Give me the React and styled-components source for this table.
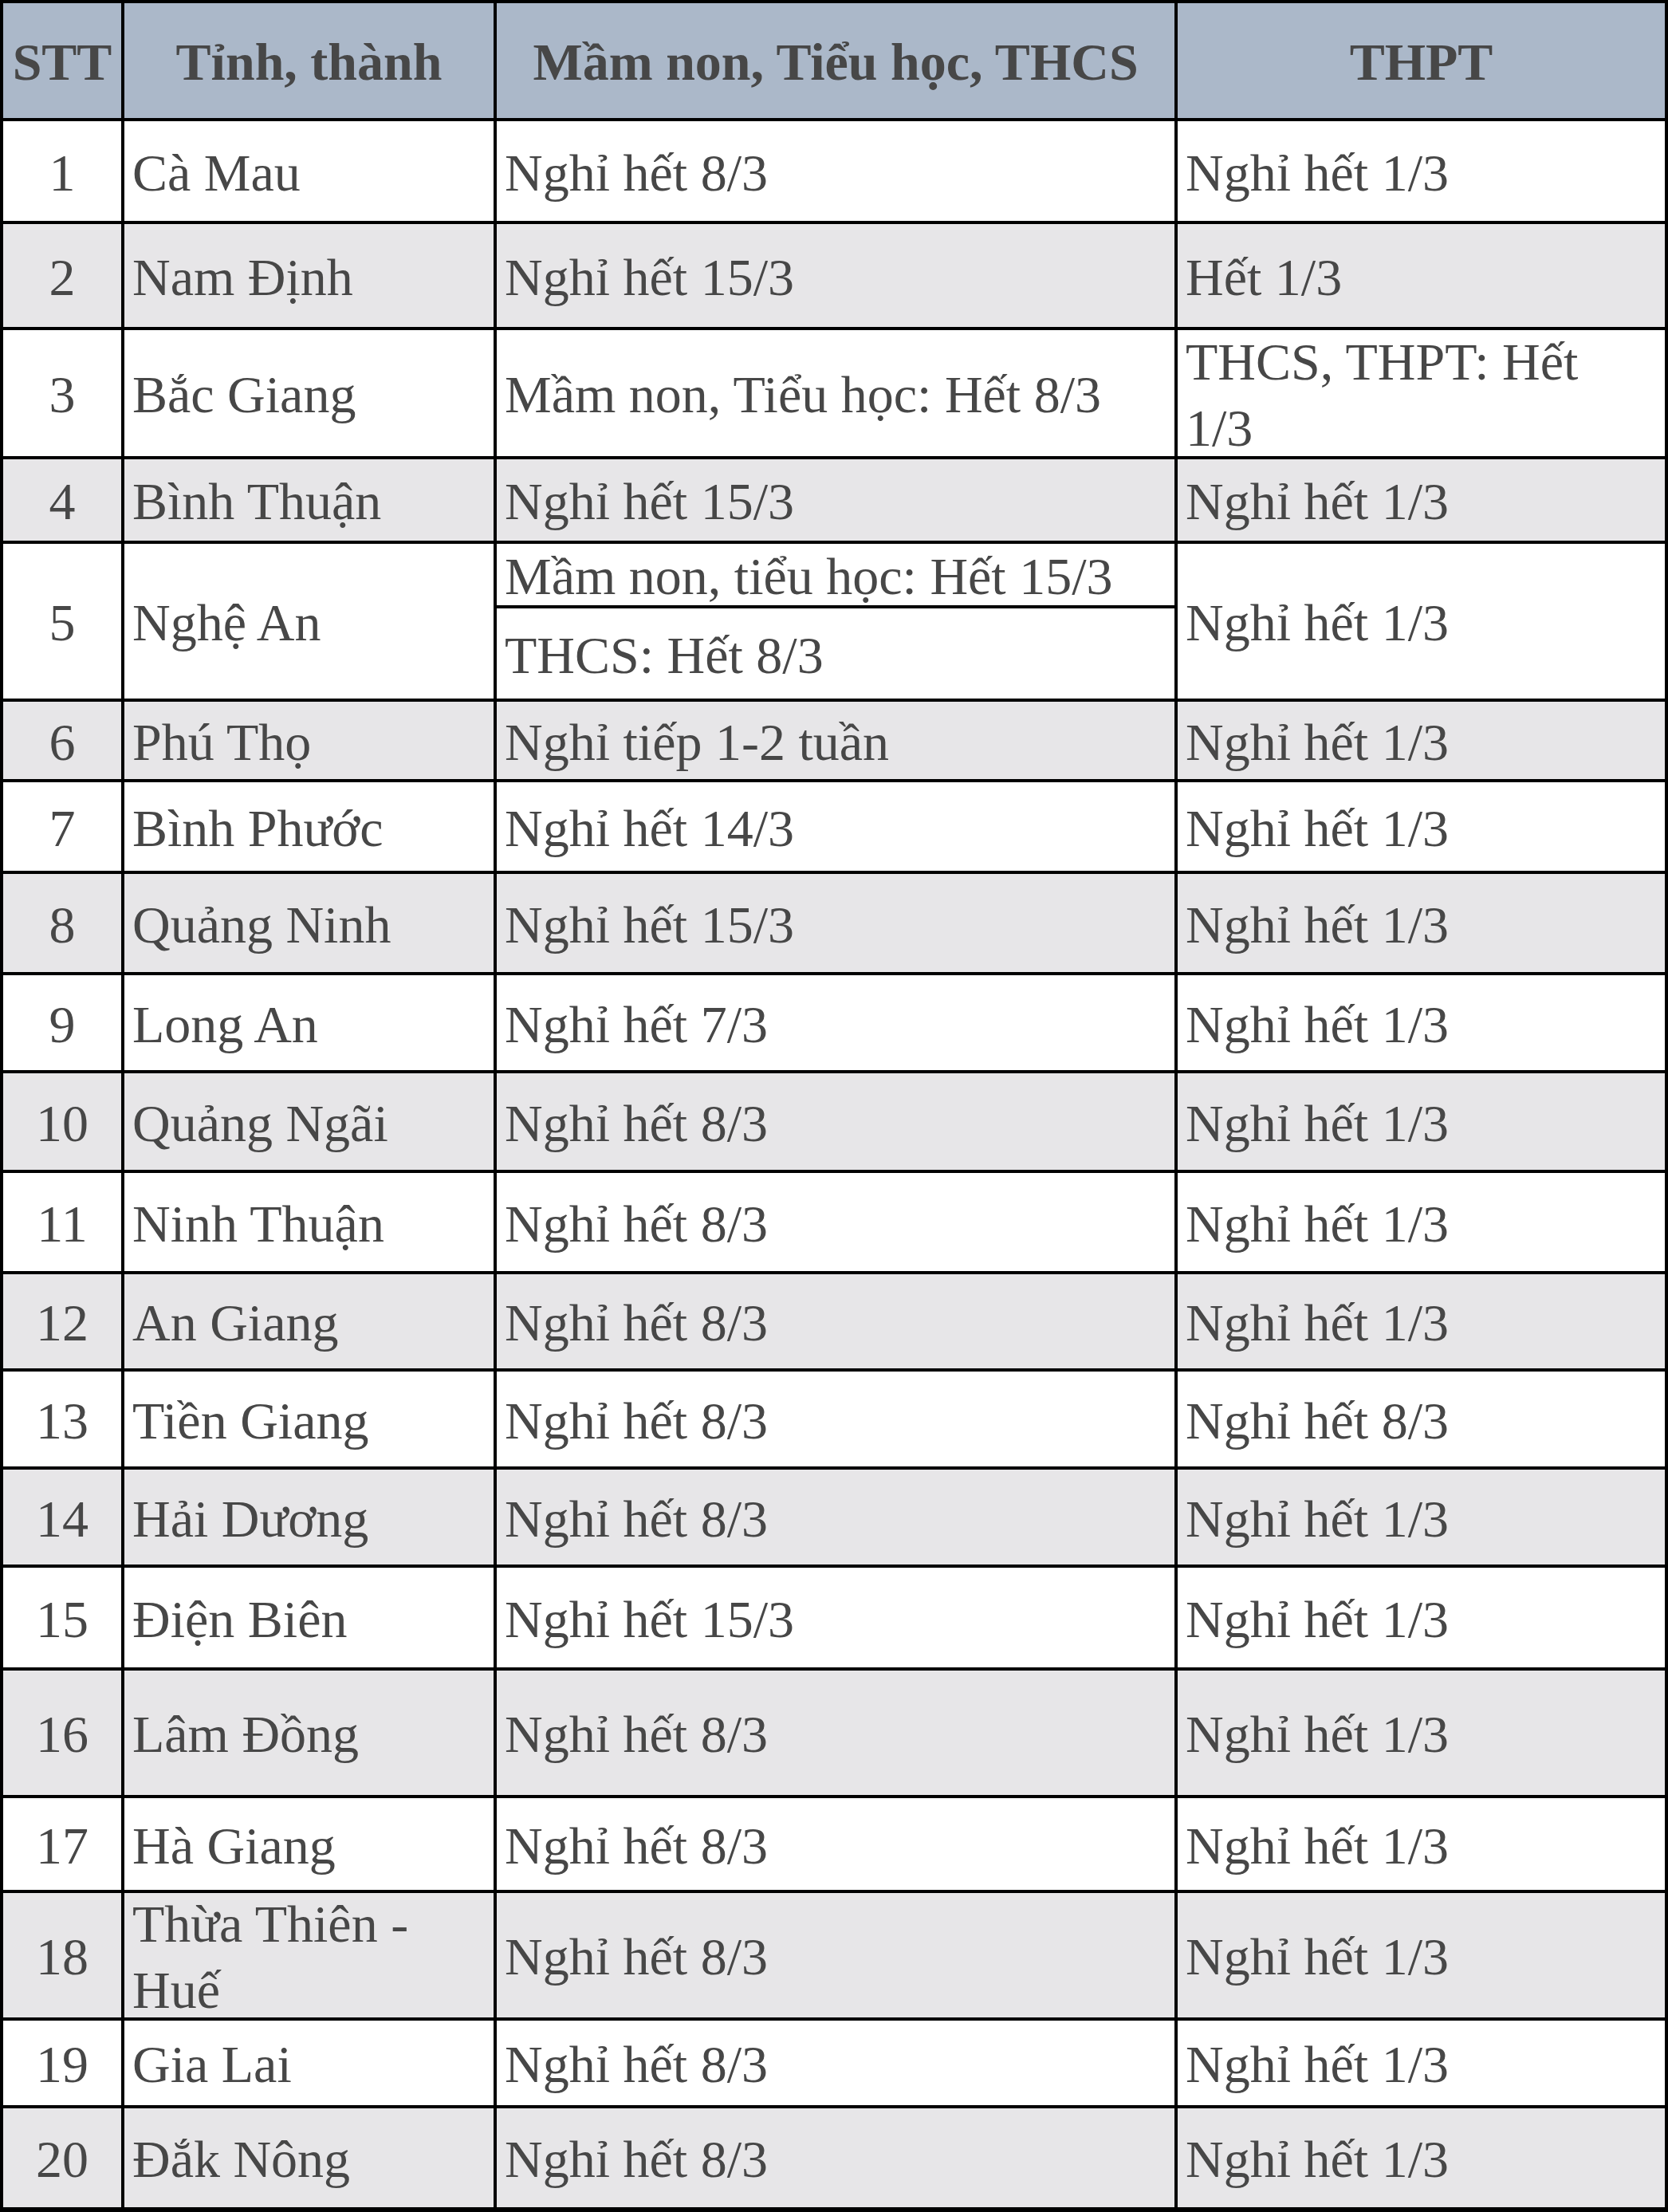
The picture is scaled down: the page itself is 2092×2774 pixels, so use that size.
import React from "react";
import styled, { createGlobalStyle } from "styled-components";

const GlobalStyle = createGlobalStyle`
  html, body {
    margin: 0;
    padding: 0;
    background: #ffffff;
  }
  body {
    font-family: "Liberation Serif", "Times New Roman", serif;
  }
`;

const HEADER_BG = "#abb8c9";
const STRIPE_BG = "#e7e6e8";

// content height of every grid row (px), line to line minus the 4px rule
const rowHeights = [
  144, // header
  125, 129, 158, 102,
  77, 113, // row 5 is split in two
  97, 111, 123, 119, 121, 123, 118, 119, 119, 125, 156, 115, 156, 106, 124,
];

const rows = [
  ["1", "Cà Mau", "Nghỉ hết 8/3", "Nghỉ hết 1/3"],
  ["2", "Nam Định", "Nghỉ hết 15/3", "Hết 1/3"],
  ["3", "Bắc Giang", "Mầm non, Tiểu học: Hết 8/3", "THCS, THPT: Hết 1/3"],
  ["4", "Bình Thuận", "Nghỉ hết 15/3", "Nghỉ hết 1/3"],
  ["5", "Nghệ An", ["Mầm non, tiểu học: Hết 15/3", "THCS: Hết 8/3"], "Nghỉ hết 1/3"],
  ["6", "Phú Thọ", "Nghỉ tiếp 1-2 tuần", "Nghỉ hết 1/3"],
  ["7", "Bình Phước", "Nghỉ hết 14/3", "Nghỉ hết 1/3"],
  ["8", "Quảng Ninh", "Nghỉ hết 15/3", "Nghỉ hết 1/3"],
  ["9", "Long An", "Nghỉ hết 7/3", "Nghỉ hết 1/3"],
  ["10", "Quảng Ngãi", "Nghỉ hết 8/3", "Nghỉ hết 1/3"],
  ["11", "Ninh Thuận", "Nghỉ hết 8/3", "Nghỉ hết 1/3"],
  ["12", "An Giang", "Nghỉ hết 8/3", "Nghỉ hết 1/3"],
  ["13", "Tiền Giang", "Nghỉ hết 8/3", "Nghỉ hết 8/3"],
  ["14", "Hải Dương", "Nghỉ hết 8/3", "Nghỉ hết 1/3"],
  ["15", "Điện Biên", "Nghỉ hết 15/3", "Nghỉ hết 1/3"],
  ["16", "Lâm Đồng", "Nghỉ hết 8/3", "Nghỉ hết 1/3"],
  ["17", "Hà Giang", "Nghỉ hết 8/3", "Nghỉ hết 1/3"],
  ["18", "Thừa Thiên - Huế", "Nghỉ hết 8/3", "Nghỉ hết 1/3"],
  ["19", "Gia Lai", "Nghỉ hết 8/3", "Nghỉ hết 1/3"],
  ["20", "Đắk Nông", "Nghỉ hết 8/3", "Nghỉ hết 1/3"],
];

const Grid = styled.div`
  display: grid;
  grid-template-columns: 148px 463px 850px 611px;
  grid-template-rows: ${(p) => p.$rows};
  gap: 4px;
  padding: 4px 4px 6px;
  width: 2092px;
  box-sizing: border-box;
  background: #000000;
`;

const Cell = styled.div`
  display: flex;
  align-items: center;
  justify-content: ${(p) => (p.$center ? "center" : "flex-start")};
  text-align: ${(p) => (p.$center ? "center" : "left")};
  padding: 5px 10px 0;
  background: ${(p) => p.$bg || "#ffffff"};
  grid-row: ${(p) => (p.$span ? `span ${p.$span}` : "auto")};
  color: #474747;
  font-size: 66px;
  line-height: 1.25;
  font-weight: ${(p) => (p.$bold ? 700 : 400)};
  overflow: visible;
  min-width: 0;
`;

const HeadCell = styled(Cell).attrs({ $center: true, $bold: true, $bg: HEADER_BG })``;

export default function App() {
  const template = rowHeights.map((h) => `${h}px`).join(" ");

  return (
    <>
      <GlobalStyle />
      <Grid $rows={template}>
        <HeadCell>STT</HeadCell>
        <HeadCell>Tỉnh, thành</HeadCell>
        <HeadCell>Mầm non, Tiểu học, THCS</HeadCell>
        <HeadCell>THPT</HeadCell>

        {rows.map(([stt, name, lower, upper], i) => {
          const bg = i % 2 === 1 ? STRIPE_BG : "#ffffff";
          if (Array.isArray(lower)) {
            return (
              <React.Fragment key={stt}>
                <Cell $center $bg={bg} $span={2}>{stt}</Cell>
                <Cell $bg={bg} $span={2}>{name}</Cell>
                <Cell $bg={bg}>{lower[0]}</Cell>
                <Cell $bg={bg} $span={2}>{upper}</Cell>
                <Cell $bg={bg}>{lower[1]}</Cell>
              </React.Fragment>
            );
          }
          return (
            <React.Fragment key={stt}>
              <Cell $center $bg={bg}>{stt}</Cell>
              <Cell $bg={bg}>{name}</Cell>
              <Cell $bg={bg}>{lower}</Cell>
              <Cell $bg={bg}>{upper}</Cell>
            </React.Fragment>
          );
        })}
      </Grid>
    </>
  );
}
